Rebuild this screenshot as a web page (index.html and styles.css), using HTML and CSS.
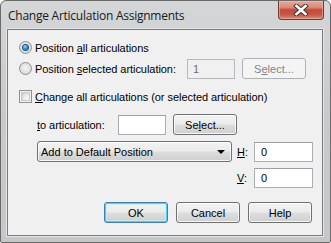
FILE: index.html
```html
<!DOCTYPE html>
<html>
<head>
<meta charset="utf-8">
<link rel="stylesheet" href="styles.css">
</head>
<body>
<div class="window">
  <div class="titlebar">
    <span class="title">Change Articulation Assignments</span>
    <div class="close">
      <svg width="16" height="12" viewBox="0 0 16 12">
        <path d="M3.5 2 L12.5 10 M12.5 2 L3.5 10" stroke="#3a3a3a" stroke-width="4.6" stroke-linecap="square" fill="none"/>
        <path d="M3.5 2 L12.5 10 M12.5 2 L3.5 10" stroke="#ffffff" stroke-width="2.6" stroke-linecap="square" fill="none"/>
      </svg>
    </div>
  </div>
  <div class="client">
    <div class="row r1">
      <span class="radio checked"><span class="dot"></span></span>
      <span class="lbl">Position <u>a</u>ll articulations</span>
    </div>
    <div class="row r2">
      <span class="radio"></span>
      <span class="lbl w-sel">Position <u>s</u>elected articulation:</span>
      <span class="input disabled">1</span>
      <span class="btn sel disabled">S<u>e</u>lect...</span>
    </div>
    <div class="row r3">
      <span class="check"></span>
      <span class="lbl"><u>C</u>hange all articulations (or selected articulation)</span>
    </div>
    <div class="row r4">
      <span class="lbl w-to"><u>t</u>o articulation:</span>
      <span class="input"></span>
      <span class="btn sel">Se<u>l</u>ect...</span>
    </div>
    <div class="row r5">
      <span class="combo">
        <span class="combo-text">Add to Default Position</span>
        <span class="arrow"></span>
      </span>
      <span class="lbl w-hv hlab"><u>H</u>:</span>
      <span class="input wide">0</span>
    </div>
    <div class="row r6">
      <span class="lbl w-hv"><u>V</u>:</span>
      <span class="input wide">0</span>
    </div>
    <div class="row r7">
      <span class="btn default">OK</span>
      <span class="btn">Cancel</span>
      <span class="btn">Help</span>
    </div>
  </div>
</div>
</body>
</html>
```

FILE: styles.css
```css
html, body {
  margin: 0;
  padding: 0;
  background: #ffffff;
}

.window {
  width: 331px;
  height: 243px;
  box-sizing: border-box;
  border: 1px solid #6a6a6a;
  border-radius: 6px 6px 2px 2px;
  background: linear-gradient(#d4d6d8, #c9cbcd 40%, #c4c6c8);
  display: flex;
  flex-direction: column;
  font-family: "Liberation Sans", Arial, sans-serif;
  font-size: 11px;
  color: #000;
}

.titlebar {
  height: 28px;
  display: flex;
  align-items: flex-start;
  justify-content: space-between;
}

.title {
  font-family: "Open Sans", "Liberation Sans", sans-serif;
  font-size: 12px;
  color: #1a1a1a;
  margin: 6px 0 0 7px;
  letter-spacing: -0.25px;
}

.close {
  width: 46px;
  height: 19px;
  margin-right: 6px;
  box-sizing: border-box;
  border: 1px solid #6a3a34;
  border-top: none;
  border-radius: 0 0 4px 4px;
  background: linear-gradient(#e8a896 0%, #d98d7a 35%, #c2473a 50%, #c75848 75%, #d98a72 100%);
  display: flex;
  align-items: center;
  justify-content: center;
  box-shadow: inset 0 0 0 1px rgba(255, 200, 190, 0.5);
}

.close svg {
  display: block;
}

.client {
  margin: 0 7px 6px 6px;
  flex: 1;
  border: 1px solid #7a7a7a;
  background: #f0f0f0;
  box-shadow: 0 0 0 1px #e4e6e8;
}

.row {
  display: flex;
  align-items: center;
  height: 21px;
}

.r1 { margin-top: 7px; padding-left: 11px; }
.r2 { padding-left: 11px; }
.r3 { margin-top: 7px; padding-left: 11px; }
.r4 { margin-top: 7px; padding-left: 29px; }
.r5 { margin-top: 6px; padding-left: 29px; }
.r6 { margin-top: 5px; padding-left: 229px; }
.r7 { margin-top: 14px; padding-left: 96px; gap: 8px; }

.lbl {
  white-space: nowrap;
  letter-spacing: -0.05px;
}

.w-sel { width: 152px; }
.w-to { width: 81px; }
.w-hv { width: 17px; }
.hlab { margin-left: 5px; }

.radio {
  width: 13px;
  height: 13px;
  box-sizing: border-box;
  border-radius: 50%;
  border: 1px solid #8e8f8f;
  background: radial-gradient(circle at 50% 45%, #f4f4f4 0%, #e0e0e0 60%, #d0d0d0 100%);
  margin-right: 3px;
  display: flex;
  align-items: center;
  justify-content: center;
  flex: none;
}

.radio .dot {
  width: 5px;
  height: 5px;
  border-radius: 50%;
  background: radial-gradient(circle at 40% 35%, #a8e2ff 0%, #2d8fd8 45%, #0f4a8a 100%);
  box-shadow: 0 0 0 1px #1c5180;
}

.check {
  width: 13px;
  height: 13px;
  box-sizing: border-box;
  border: 1px solid #8e8f8f;
  background: #f4f4f4;
  box-shadow: inset 0 0 0 1px #f4f4f4, inset 0 0 0 2px #c8c8c8, inset 2px 2px 4px #b8b8b8;
  margin-right: 3px;
  flex: none;
}

.input {
  width: 48px;
  height: 20px;
  box-sizing: border-box;
  border: 1px solid #abadb3;
  border-top-color: #9c9fa6;
  background: #ffffff;
  padding-left: 5px;
  line-height: 18px;
  flex: none;
}

.input.disabled {
  background: #f0f0f0;
  border-color: #b7b9bd;
  color: #6d6d6d;
}

.input.wide {
  width: 59px;
  padding-left: 6px;
}

.btn {
  width: 64px;
  height: 21px;
  box-sizing: border-box;
  border: 1px solid #707070;
  border-radius: 3px;
  background: linear-gradient(#f2f2f2 0%, #ebebeb 49%, #dddddd 51%, #cfcfcf 100%);
  box-shadow: inset 0 0 0 1px rgba(255, 255, 255, 0.8);
  display: flex;
  align-items: center;
  justify-content: center;
  flex: none;
}

.btn.sel {
  margin-left: 7px;
}

.btn.disabled {
  border-color: #adb2b5;
  background: #f4f4f4;
  color: #838383;
  box-shadow: none;
}

.btn.default {
  border-color: #3c7fb1;
  box-shadow: inset 0 0 0 1px #48d2f8, inset 0 0 0 2px rgba(200, 240, 255, 0.6);
}

.combo {
  width: 195px;
  height: 21px;
  box-sizing: border-box;
  border: 1px solid #707070;
  border-radius: 3px;
  background: linear-gradient(#f2f2f2 0%, #ebebeb 49%, #dddddd 51%, #cfcfcf 100%);
  box-shadow: inset 0 0 0 1px rgba(255, 255, 255, 0.8);
  display: flex;
  align-items: center;
  padding: 0 6px 0 3px;
  flex: none;
}

.combo-text {
  flex: 1;
}

.arrow {
  width: 0;
  height: 0;
  border-left: 4px solid transparent;
  border-right: 4px solid transparent;
  border-top: 4px solid #000;
  margin-top: 1px;
}
```
